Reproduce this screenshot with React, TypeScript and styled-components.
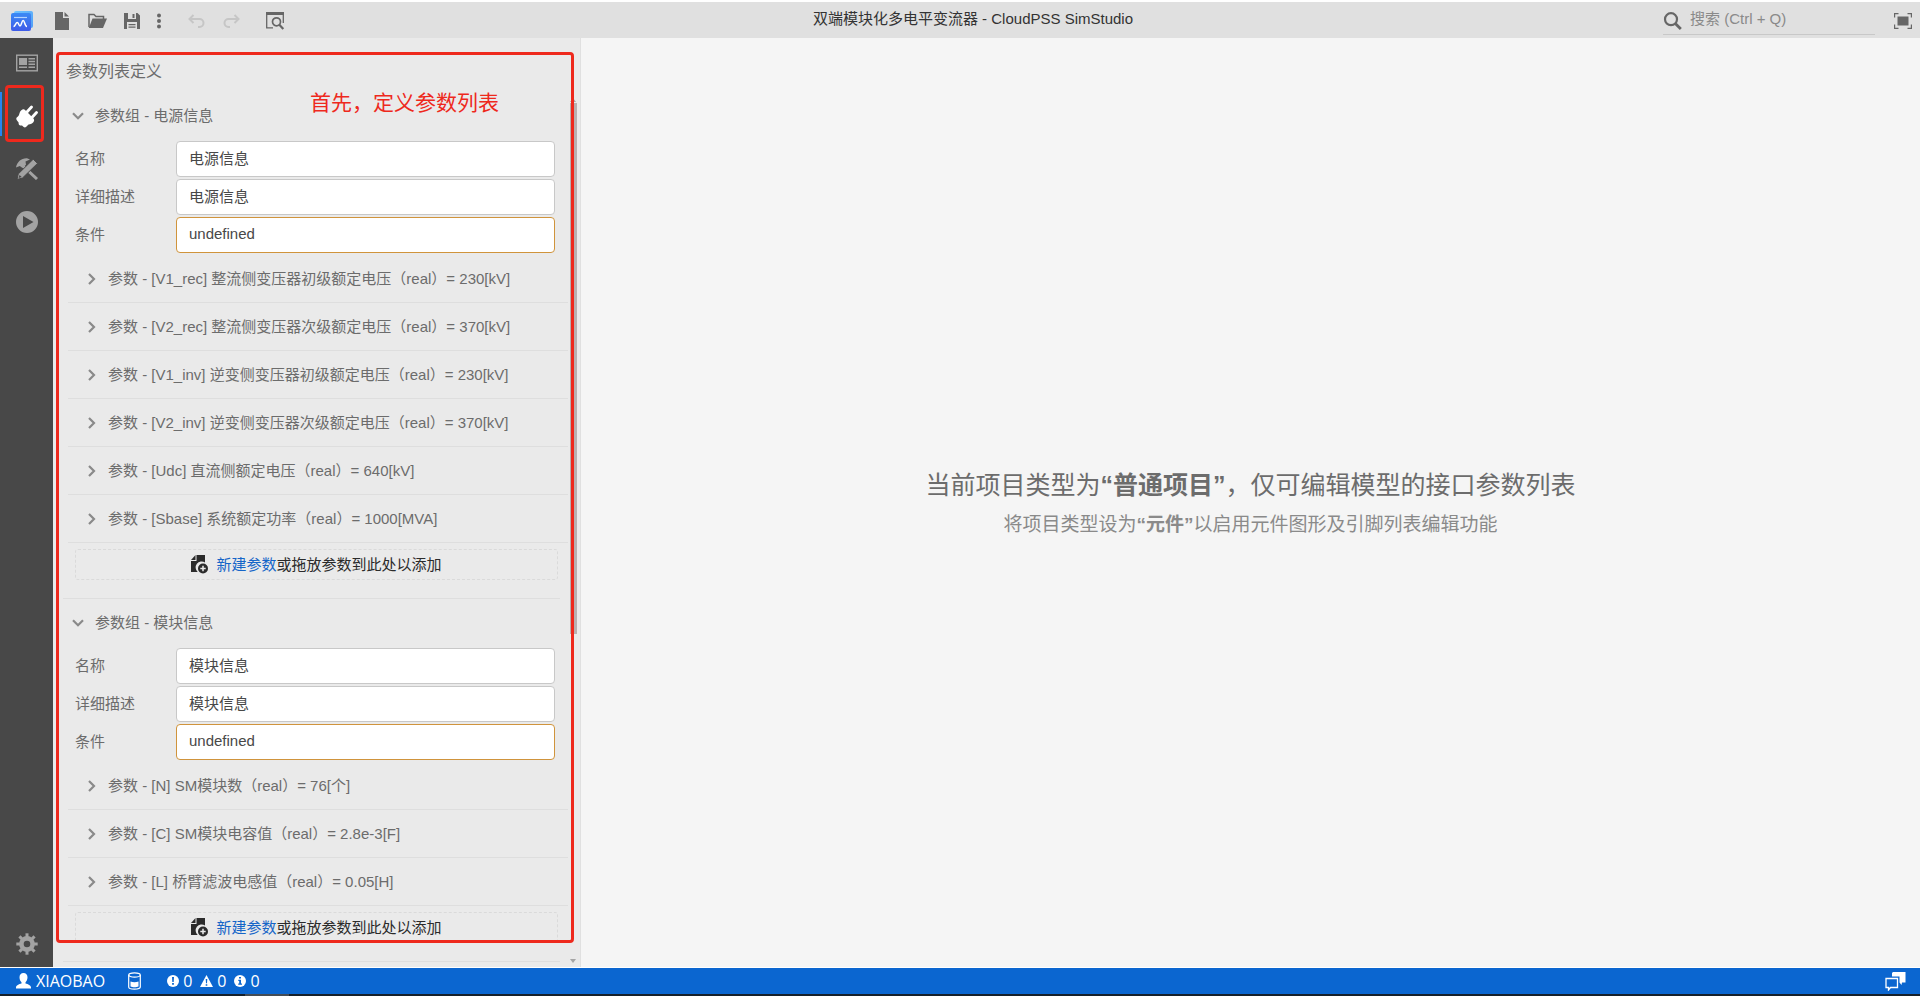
import React, { useState } from "react";
import styled, { createGlobalStyle, css } from "styled-components";

const GlobalStyle = createGlobalStyle`
  *, *::before, *::after { box-sizing: border-box; }
  html, body, #root { margin: 0; height: 100%; }
  body {
    font-family: "Liberation Sans", "Noto Sans CJK SC", sans-serif;
    font-size: 15px;
    line-height: 20px;
    color: #6c6c6c;
    background: #f5f5f5;
  }
  button, input { font: inherit; color: inherit; }
  svg { display: block; flex: none; }
`;

const Page = styled.div`
  display: flex;
  flex-direction: column;
  height: 100vh;
  overflow: hidden;
  border-top: 2px solid #fff;
`;

/* ---------- title bar ---------- */

const TitleBar = styled.header`
  display: grid;
  grid-template-columns: 300px 1fr 274px;
  align-items: center;
  flex: none;
  height: 36px;
  padding-bottom: 6px;
  background: #e0e0e0;
`;

const Tools = styled.div`
  display: flex;
  align-items: center;
  padding: 4px 0 0 8px;
`;

const ToolButton = styled.button<{ $gap?: number; $narrow?: boolean }>`
  display: grid;
  place-items: center;
  width: ${(p) => (p.$narrow ? 16 : 28)}px;
  height: 30px;
  margin-left: ${(p) => p.$gap ?? 0}px;
  padding: 0;
  border: 0;
  background: none;
  color: #666;
  &:disabled { color: #c6c6c6; }
`;

const PageTitle = styled.h1`
  margin: 0;
  font-size: 15px;
  font-weight: 400;
  line-height: 20px;
  text-align: center;
  color: #333;
`;

const TitleRight = styled.div`
  display: flex;
  align-items: center;
  justify-content: flex-end;
  gap: 14px;
  padding: 4px 3px 0 0;
`;

const SearchBox = styled.label`
  display: flex;
  align-items: center;
  width: 212px;
  height: 28px;
  gap: 8px;
  border-bottom: 1px solid #c8c8c8;
  color: #666;
`;

const SearchInput = styled.input`
  flex: 1;
  min-width: 0;
  padding: 0 0 3px;
  border: 0;
  outline: 0;
  background: none;
  &::placeholder { color: #8a8a8a; opacity: 1; }
`;

/* ---------- body ---------- */

const Body = styled.div`
  display: flex;
  flex: 1;
  min-height: 0;
  border-bottom: 1px solid #fff;
`;

const SideBar = styled.nav`
  display: flex;
  flex-direction: column;
  gap: 5px;
  flex: none;
  width: 53px;
  padding-top: 1px;
  background: #484848;
`;

const SideButton = styled.button<{ $active?: boolean; $last?: boolean }>`
  position: relative;
  display: grid;
  place-items: center;
  height: ${(p) => (p.$last ? 46 : 48)}px;
  padding: 0;
  border: 0;
  background: none;
  color: #a3a3a3;
  ${(p) => p.$last && css`margin-top: auto;`}
  ${(p) =>
    p.$active &&
    css`
      color: #fff;
      &::before {
        content: "";
        position: absolute;
        left: 0;
        top: 0;
        width: 2px;
        height: 44px;
        background: #2584f5;
      }
    `}
`;

const ActiveMark = styled.span`
  position: absolute;
  inset: -7px 9px -2px 5px;
  border: 3px solid #ee291d;
  border-radius: 4px;
`;

const Panel = styled.aside`
  position: relative;
  display: flex;
  flex-direction: column;
  flex: 0 0 528px;
  min-height: 0;
  background: #eaeaea;
  border-right: 1px solid #e0e0e0;
`;

const PanelTitle = styled.h2`
  flex: none;
  margin: 0;
  padding: 24px 13px 10px;
  font-size: 16px;
  line-height: 20px;
  font-weight: 400;
`;

const ScrollArea = styled.div`
  flex: 1;
  min-height: 0;
  overflow: hidden;
`;

const Group = styled.section`
  margin: 0 20px 0 10px;
  border-bottom: 1px solid #dedede;
`;

const GroupHeader = styled.button`
  display: flex;
  align-items: center;
  gap: 11px;
  width: 100%;
  height: 47px;
  padding: 0 9px;
  border: 0;
  background: none;
  text-align: left;
`;

const Fields = styled.div`
  display: flex;
  flex-direction: column;
  gap: 2px;
  padding: 2px 5px 2px 12px;
`;

const Field = styled.label`
  display: grid;
  grid-template-columns: 101px 1fr;
  align-items: center;
`;

const FieldInput = styled.input<{ $warn?: boolean }>`
  height: 36px;
  min-width: 0;
  padding: 0 12px 4px;
  border: 1px solid ${(p) => (p.$warn ? "#d0943c" : "#c8c8c8")};
  border-radius: 4px;
  outline: 0;
  background: #fff;
  color: #484848;
`;

const ParamList = styled.ul`
  margin: 0 -8px 0 5px;
  padding: 0;
  list-style: none;
`;

const ParamItem = styled.li`
  border-bottom: 1px solid #dedede;
`;

const ParamButton = styled.button`
  display: flex;
  align-items: center;
  gap: 11px;
  width: 100%;
  height: 47px;
  padding: 0 17px;
  border: 0;
  background: none;
  text-align: left;
  white-space: nowrap;
`;

const DropZone = styled.div`
  display: flex;
  align-items: center;
  justify-content: center;
  gap: 8px;
  height: 31px;
  margin: 6px 2px 18px 12px;
  border: 1px dashed #dadada;
  border-radius: 3px;
  color: #2b2b2b;
`;

const AddLink = styled.a`
  color: #1565c8;
  text-decoration: none;
`;

const ScrollThumb = styled.div`
  position: absolute;
  top: 65px;
  right: 3px;
  width: 7px;
  height: 531px;
  background: #bab0b0;
`;

const ScrollArrow = styled.svg<{ $top?: boolean }>`
  position: absolute;
  right: 4px;
  ${(p) => (p.$top ? "top: 60px;" : "bottom: 4px;")}
`;

const PanelMark = styled.div`
  position: absolute;
  inset: 14px 6px 24px 3px;
  border: 3px solid #ee291d;
  border-radius: 4px;
  pointer-events: none;
`;

const Note = styled.p`
  position: absolute;
  top: 50px;
  left: 257px;
  margin: 0;
  font-size: 21px;
  line-height: 30px;
  color: #ee291d;
`;

const Main = styled.main`
  display: flex;
  flex: 1;
  min-width: 0;
  flex-direction: column;
  align-items: center;
  justify-content: center;
  padding-top: 5px;
  text-align: center;
`;

const Headline = styled.p`
  margin: 0;
  font-size: 25px;
  line-height: 40px;
`;

const Hint = styled.p`
  margin: 0;
  font-size: 19px;
  line-height: 40px;
  color: #8a8a8a;
`;

/* ---------- status bar ---------- */

const StatusBar = styled.footer`
  display: flex;
  align-items: center;
  flex: none;
  height: 26px;
  padding: 0 14px 0 15px;
  background: #0b66d0;
  color: #fff;
  font-family: "Open Sans", "Noto Sans", sans-serif;
  font-size: 16px;
`;

const StatusButton = styled.button<{ $left?: number; $end?: boolean }>`
  display: flex;
  align-items: center;
  gap: 4px;
  height: 26px;
  margin-left: ${(p) => (p.$end ? "auto" : `${p.$left ?? 0}px`)};
  padding: 0;
  border: 0;
  background: none;
`;

const DesktopEdge = styled.div`
  flex: none;
  height: 2px;
  padding-left: 245px;
  background: #16202b;
  &::before {
    content: "";
    display: block;
    width: 44px;
    height: 2px;
    background: #444c55;
  }
`;

/* ---------- icons ---------- */

const LogoIcon = () => (
  <svg width="22" height="20" viewBox="0 0 22 20">
    <defs>
      <linearGradient id="logoBack" x1="0" y1="0" x2="1" y2="1">
        <stop offset="0" stopColor="#6fc4ff" />
        <stop offset="1" stopColor="#4f9df5" />
      </linearGradient>
      <linearGradient id="logoFront" x1="0" y1="0" x2="0" y2="1">
        <stop offset="0" stopColor="#3a8af5" />
        <stop offset="1" stopColor="#3f5be8" />
      </linearGradient>
    </defs>
    <rect x="3" y="0" width="19" height="17" rx="2" fill="url(#logoBack)" />
    <rect x="0" y="2" width="20" height="18" rx="2" fill="url(#logoFront)" />
    <path d="M3 6.500h13" stroke="#b5d5ff" strokeWidth="1.200" />
    <path d="M2.500 15.500c1.800 0 2.200-4 3.700-4s1.500 3.500 2.800 3.500 1.700-5.500 3.200-5.500 1.500 6 3.800 6" fill="none" stroke="#fff" strokeWidth="1.500" />
  </svg>
);

const FileIcon = () => (
  <svg width="14" height="18" viewBox="0 0 14 18" fill="currentColor">
    <path d="M0 0h8v6h6v12H0z" />
    <path d="M9.500 0L14 4.600H9.500z" />
  </svg>
);

const FolderIcon = () => (
  <svg width="19" height="16" viewBox="0 0 19 16">
    <path d="M1 14V1.500h5l2 2h7.500V6" fill="none" stroke="currentColor" strokeWidth="1.500" />
    <path d="M4.500 5.500H19L15 15H.8z" fill="currentColor" />
  </svg>
);

const SaveIcon = () => (
  <svg width="16" height="16" viewBox="0 0 16 16">
    <path fillRule="evenodd" fill="currentColor" d="M0 0h13.500L16 2.500V16H0zM4 0v6h8V0zM3 9v7h10V9z" />
    <path fill="currentColor" d="M8.500 1h2v4h-2zM4.500 11h7v1.200h-7zM4.500 13.500h7v1.200h-7z" />
  </svg>
);

const MoreIcon = () => (
  <svg width="4" height="16" viewBox="0 0 4 16" fill="currentColor">
    <circle cx="2" cy="2.500" r="2" />
    <circle cx="2" cy="8" r="2" />
    <circle cx="2" cy="13.500" r="2" />
  </svg>
);

const UndoIcon = ({ flip }: { flip?: boolean }) => (
  <svg width="17" height="14" viewBox="0 0 17 14">
    <g transform={flip ? "translate(17 0) scale(-1 1)" : undefined}>
      <path d="M2 5h9.500a4 4 0 0 1 0 8H10" fill="none" stroke="currentColor" strokeWidth="2" />
      <path d="M5.500 1L1.500 5l4 4" fill="none" stroke="currentColor" strokeWidth="2" />
    </g>
  </svg>
);

const PreviewIcon = () => (
  <svg width="19" height="18" viewBox="0 0 19 18">
    <path d="M0 0h18v3H0z" fill="currentColor" />
    <path d="M.700 3v12.800H7M17.300 3v8" fill="none" stroke="currentColor" strokeWidth="1.300" />
    <circle cx="10.500" cy="9.800" r="4" fill="none" stroke="currentColor" strokeWidth="1.700" />
    <path d="M13.300 12.800l4 4.200" stroke="currentColor" strokeWidth="2.200" />
  </svg>
);

const SearchIcon = () => (
  <svg width="19" height="18" viewBox="0 0 19 18" fill="none" stroke="currentColor">
    <circle cx="8" cy="7.200" r="6" strokeWidth="2.200" />
    <path d="M12.300 11.500l5.500 5.500" strokeWidth="2.800" />
  </svg>
);

const FullscreenIcon = () => (
  <svg width="18" height="16" viewBox="0 0 18 16">
    <path d="M.6 4.500V.600h3.900M13.500.600h3.900v3.900M17.400 11.500v3.900h-3.900M4.500 15.400H.6v-3.900" fill="none" stroke="currentColor" strokeWidth="1.200" />
    <rect x="3.500" y="3.500" width="11" height="9" fill="currentColor" />
  </svg>
);

const NewsIcon = () => (
  <svg width="22" height="18" viewBox="0 0 22 18">
    <rect x=".7" y="1.200" width="20.600" height="15.600" fill="none" stroke="currentColor" strokeWidth="1.400" />
    <path d="M3 4h8v7H3zM12.500 4H19v1.400h-6.500zM12.500 6.800H19v1.400h-6.500zM12.500 9.600H19V11h-6.500zM3 12.600h8V14H3zM12.500 12.600H19V14h-6.500z" fill="currentColor" />
  </svg>
);

const PlugIcon = () => (
  <svg width="22" height="23" viewBox="0 0 22 23">
    <path d="M6.500 4.500c1.200-.4 2 0 2.800.8l7.500 7.500c1.500 1.400 1.700 2.700.7 4.200-1 1.400-3 2.500-5 2.500L10 22c-.8.6-1.600.5-2.300-.1L6 20.500c-2.300.2-3.600-.6-3.400-3L1 15.500c-1.200-1.500-.8-2.500.3-3.500 1-.8 1.700-1.500 2-3 .3-1.800 1.500-3.800 3.200-4.500z" fill="currentColor" />
    <path d="M10.500 7.500L15.500 2M15.500 13l5-5.500" stroke="currentColor" strokeWidth="2.800" strokeLinecap="round" />
  </svg>
);

const ToolsIcon = () => (
  <svg width="24" height="22" viewBox="0 0 24 22">
    <path d="M8.500 8.500L22 21" stroke="currentColor" strokeWidth="3" />
    <path d="M1 9.500C2 4 6.500 0 12 .300L15 1.500 10.500 3.500l.5 3.200L7.500 10 4.800 8z" fill="currentColor" />
    <path d="M2 21.500l1.200-5.500L18.200 1.200l4.300 4.200L7.500 20z" fill="currentColor" stroke="#484848" strokeWidth="1" />
    <path d="M3.600 20l.9-3 2.200 2z" fill="#484848" />
  </svg>
);

const PlayIcon = () => (
  <svg width="22" height="22" viewBox="0 0 22 22">
    <path fillRule="evenodd" fill="currentColor" d="M11 0a11 11 0 1 1 0 22a11 11 0 0 1 0-22zM7 5v12l10.500-6z" />
  </svg>
);

const GearIcon = () => (
  <svg width="22" height="22" viewBox="0 0 22 22" fill="none" stroke="currentColor">
    <circle cx="11" cy="11" r="5.600" strokeWidth="4.600" />
    {[0, 45, 90, 135, 180, 225, 270, 315].map((a) => (
      <path key={a} d="M11 4.500V.300" strokeWidth="3" transform={`rotate(${a} 11 11)`} />
    ))}
  </svg>
);

const ChevronDown = () => (
  <svg width="12" height="8" viewBox="0 0 12 8">
    <path d="M1 1.200l5 5 5-5" fill="none" stroke="#8a8a8a" strokeWidth="2.200" />
  </svg>
);

const ChevronRight = () => (
  <svg width="12" height="12" viewBox="0 0 12 12">
    <path d="M4 1l5 5-5 5" fill="none" stroke="#8a8a8a" strokeWidth="2.200" />
  </svg>
);

const AddFileIcon = () => (
  <svg width="17" height="19" viewBox="0 0 17 19">
    <path d="M5.500 0H14v7.500a6 6 0 0 0-7.300 9.500H0V6h5.500z" fill="currentColor" />
    <path d="M0 5L4.500 0v5z" fill="currentColor" />
    <circle cx="12" cy="13.500" r="5" fill="currentColor" />
    <path d="M12 10.800v5.400M9.300 13.500h5.400" stroke="#eaeaea" strokeWidth="1.500" />
  </svg>
);

const UserIcon = () => (
  <svg width="17" height="16" viewBox="0 0 17 16" fill="currentColor">
    <path d="M8.500 0c2.500 0 4 1.800 4 4.300 0 2.200-.8 4-2 5v1.200c2.500.7 5.500 1.700 5.500 4V15.500H1V14.500c0-2.300 3-3.300 5.500-4V9.300c-1.200-1-2-2.800-2-5C4.500 1.800 6 0 8.500 0z" />
  </svg>
);

const StorageIcon = () => (
  <svg width="13" height="18" viewBox="0 0 13 18">
    <path d="M.700 3v12c0 1.200 2.600 2.200 5.800 2.200s5.800-1 5.800-2.200V3" fill="none" stroke="currentColor" strokeWidth="1.200" />
    <ellipse cx="6.500" cy="3" rx="5.800" ry="2.200" fill="none" stroke="currentColor" strokeWidth="1.200" />
    <path d="M2.500 9.500c2.300 1 5.700 1 8 0v5c-2 1-6 1-8 0z" fill="currentColor" />
  </svg>
);

const ErrorIcon = () => (
  <svg width="12" height="12" viewBox="0 0 12 12">
    <circle cx="6" cy="6" r="6" fill="currentColor" />
    <path d="M5 2h2l-.3 5H5.300zM5.100 8h1.800v1.800H5.100z" fill="#0b66d0" />
  </svg>
);

const WarnIcon = () => (
  <svg width="13" height="12" viewBox="0 0 13 12">
    <path d="M6.500 0L13 12H0z" fill="currentColor" />
    <path d="M5.700 4h1.600L7 8.200H6zM5.700 9.200h1.600v1.500H5.700z" fill="#0b66d0" />
  </svg>
);

const InfoIcon = () => (
  <svg width="12" height="12" viewBox="0 0 12 12">
    <circle cx="6" cy="6" r="6" fill="currentColor" />
    <path d="M5 2h2v1.600H5zM4.300 4.700H7v3.800h1v1.200H4.200V8.500h1V5.900h-.9z" fill="#0b66d0" />
  </svg>
);

const ChatIcon = () => (
  <svg width="21" height="19" viewBox="0 0 21 19">
    <path d="M8 0h12.500v10.500H17l-.5 2.500-2-2.500V4.500H7V1z" fill="currentColor" />
    <path d="M1 6.500h11.500v9H5.500L3.500 18v-2.500H1z" fill="none" stroke="currentColor" strokeWidth="1.300" />
  </svg>
);

/* ---------- data ---------- */

interface ParamGroup {
  name: string;
  params: string[];
}

const groups: ParamGroup[] = [
  {
    name: "电源信息",
    params: [
      "参数 - [V1_rec] 整流侧变压器初级额定电压（real）= 230[kV]",
      "参数 - [V2_rec] 整流侧变压器次级额定电压（real）= 370[kV]",
      "参数 - [V1_inv] 逆变侧变压器初级额定电压（real）= 230[kV]",
      "参数 - [V2_inv] 逆变侧变压器次级额定电压（real）= 370[kV]",
      "参数 - [Udc] 直流侧额定电压（real）= 640[kV]",
      "参数 - [Sbase] 系统额定功率（real）= 1000[MVA]",
    ],
  },
  {
    name: "模块信息",
    params: [
      "参数 - [N] SM模块数（real）= 76[个]",
      "参数 - [C] SM模块电容值（real）= 2.8e-3[F]",
      "参数 - [L] 桥臂滤波电感值（real）= 0.05[H]",
    ],
  },
];

function GroupEditor({ group }: { group: ParamGroup }) {
  const [name, setName] = useState(group.name);
  const [description, setDescription] = useState(group.name);
  const [condition, setCondition] = useState("undefined");
  return (
    <Group>
      <GroupHeader type="button" aria-expanded="true">
        <ChevronDown />
        参数组 - {name}
      </GroupHeader>
      <Fields>
        <Field>
          名称
          <FieldInput value={name} onChange={(e) => setName(e.target.value)} />
        </Field>
        <Field>
          详细描述
          <FieldInput value={description} onChange={(e) => setDescription(e.target.value)} />
        </Field>
        <Field>
          条件
          <FieldInput $warn value={condition} onChange={(e) => setCondition(e.target.value)} />
        </Field>
      </Fields>
      <ParamList>
        {group.params.map((p) => (
          <ParamItem key={p}>
            <ParamButton type="button" aria-expanded="false">
              <ChevronRight />
              {p}
            </ParamButton>
          </ParamItem>
        ))}
      </ParamList>
      <DropZone>
        <AddFileIcon />
        <span>
          <AddLink href="#new">新建参数</AddLink>或拖放参数到此处以添加
        </span>
      </DropZone>
    </Group>
  );
}

export default function App() {
  return (
    <>
      <GlobalStyle />
      <Page>
        <TitleBar>
          <Tools>
            <ToolButton type="button" aria-label="CloudPSS"><LogoIcon /></ToolButton>
            <ToolButton type="button" aria-label="新建" $gap={12}><FileIcon /></ToolButton>
            <ToolButton type="button" aria-label="打开" $gap={7}><FolderIcon /></ToolButton>
            <ToolButton type="button" aria-label="保存" $gap={7}><SaveIcon /></ToolButton>
            <ToolButton type="button" aria-label="更多" $gap={5} $narrow><MoreIcon /></ToolButton>
            <ToolButton type="button" aria-label="撤销" $gap={15} disabled><UndoIcon /></ToolButton>
            <ToolButton type="button" aria-label="重做" $gap={7} disabled><UndoIcon flip /></ToolButton>
            <ToolButton type="button" aria-label="预览" $gap={16}><PreviewIcon /></ToolButton>
          </Tools>
          <PageTitle>双端模块化多电平变流器 - CloudPSS SimStudio</PageTitle>
          <TitleRight>
            <SearchBox>
              <SearchIcon />
              <SearchInput type="text" aria-label="搜索" placeholder="搜索 (Ctrl + Q)" />
            </SearchBox>
            <ToolButton type="button" aria-label="全屏"><FullscreenIcon /></ToolButton>
          </TitleRight>
        </TitleBar>

        <Body>
          <SideBar>
            <SideButton type="button" aria-label="总览"><NewsIcon /></SideButton>
            <SideButton type="button" aria-label="接口" $active>
              <PlugIcon />
              <ActiveMark />
            </SideButton>
            <SideButton type="button" aria-label="实现"><ToolsIcon /></SideButton>
            <SideButton type="button" aria-label="运行"><PlayIcon /></SideButton>
            <SideButton type="button" aria-label="设置" $last><GearIcon /></SideButton>
          </SideBar>

          <Panel>
            <PanelTitle>参数列表定义</PanelTitle>
            <ScrollArea>
              {groups.map((g) => (
                <GroupEditor key={g.name} group={g} />
              ))}
            </ScrollArea>
            <ScrollThumb />
            <ScrollArrow $top width="6" height="4" viewBox="0 0 6 4" aria-hidden="true">
              <path d="M0 4l3-4 3 4z" fill="#a5a5a5" />
            </ScrollArrow>
            <ScrollArrow width="6" height="4" viewBox="0 0 6 4" aria-hidden="true">
              <path d="M0 0l3 4 3-4z" fill="#a5a5a5" />
            </ScrollArrow>
            <PanelMark />
            <Note>首先，定义参数列表</Note>
          </Panel>

          <Main>
            <Headline>
              当前项目类型为<strong>“普通项目”</strong>，仅可编辑模型的接口参数列表
            </Headline>
            <Hint>
              将项目类型设为<strong>“元件”</strong>以启用元件图形及引脚列表编辑功能
            </Hint>
          </Main>
        </Body>

        <StatusBar>
          <StatusButton type="button"><UserIcon />XIAOBAO</StatusButton>
          <StatusButton type="button" aria-label="存储" $left={23}><StorageIcon /></StatusButton>
          <StatusButton type="button" aria-label="错误 0" $left={26}><ErrorIcon />0</StatusButton>
          <StatusButton type="button" aria-label="警告 0" $left={8}><WarnIcon />0</StatusButton>
          <StatusButton type="button" aria-label="信息 0" $left={8}><InfoIcon />0</StatusButton>
          <StatusButton type="button" aria-label="消息" $end><ChatIcon /></StatusButton>
        </StatusBar>
        <DesktopEdge />
      </Page>
    </>
  );
}
